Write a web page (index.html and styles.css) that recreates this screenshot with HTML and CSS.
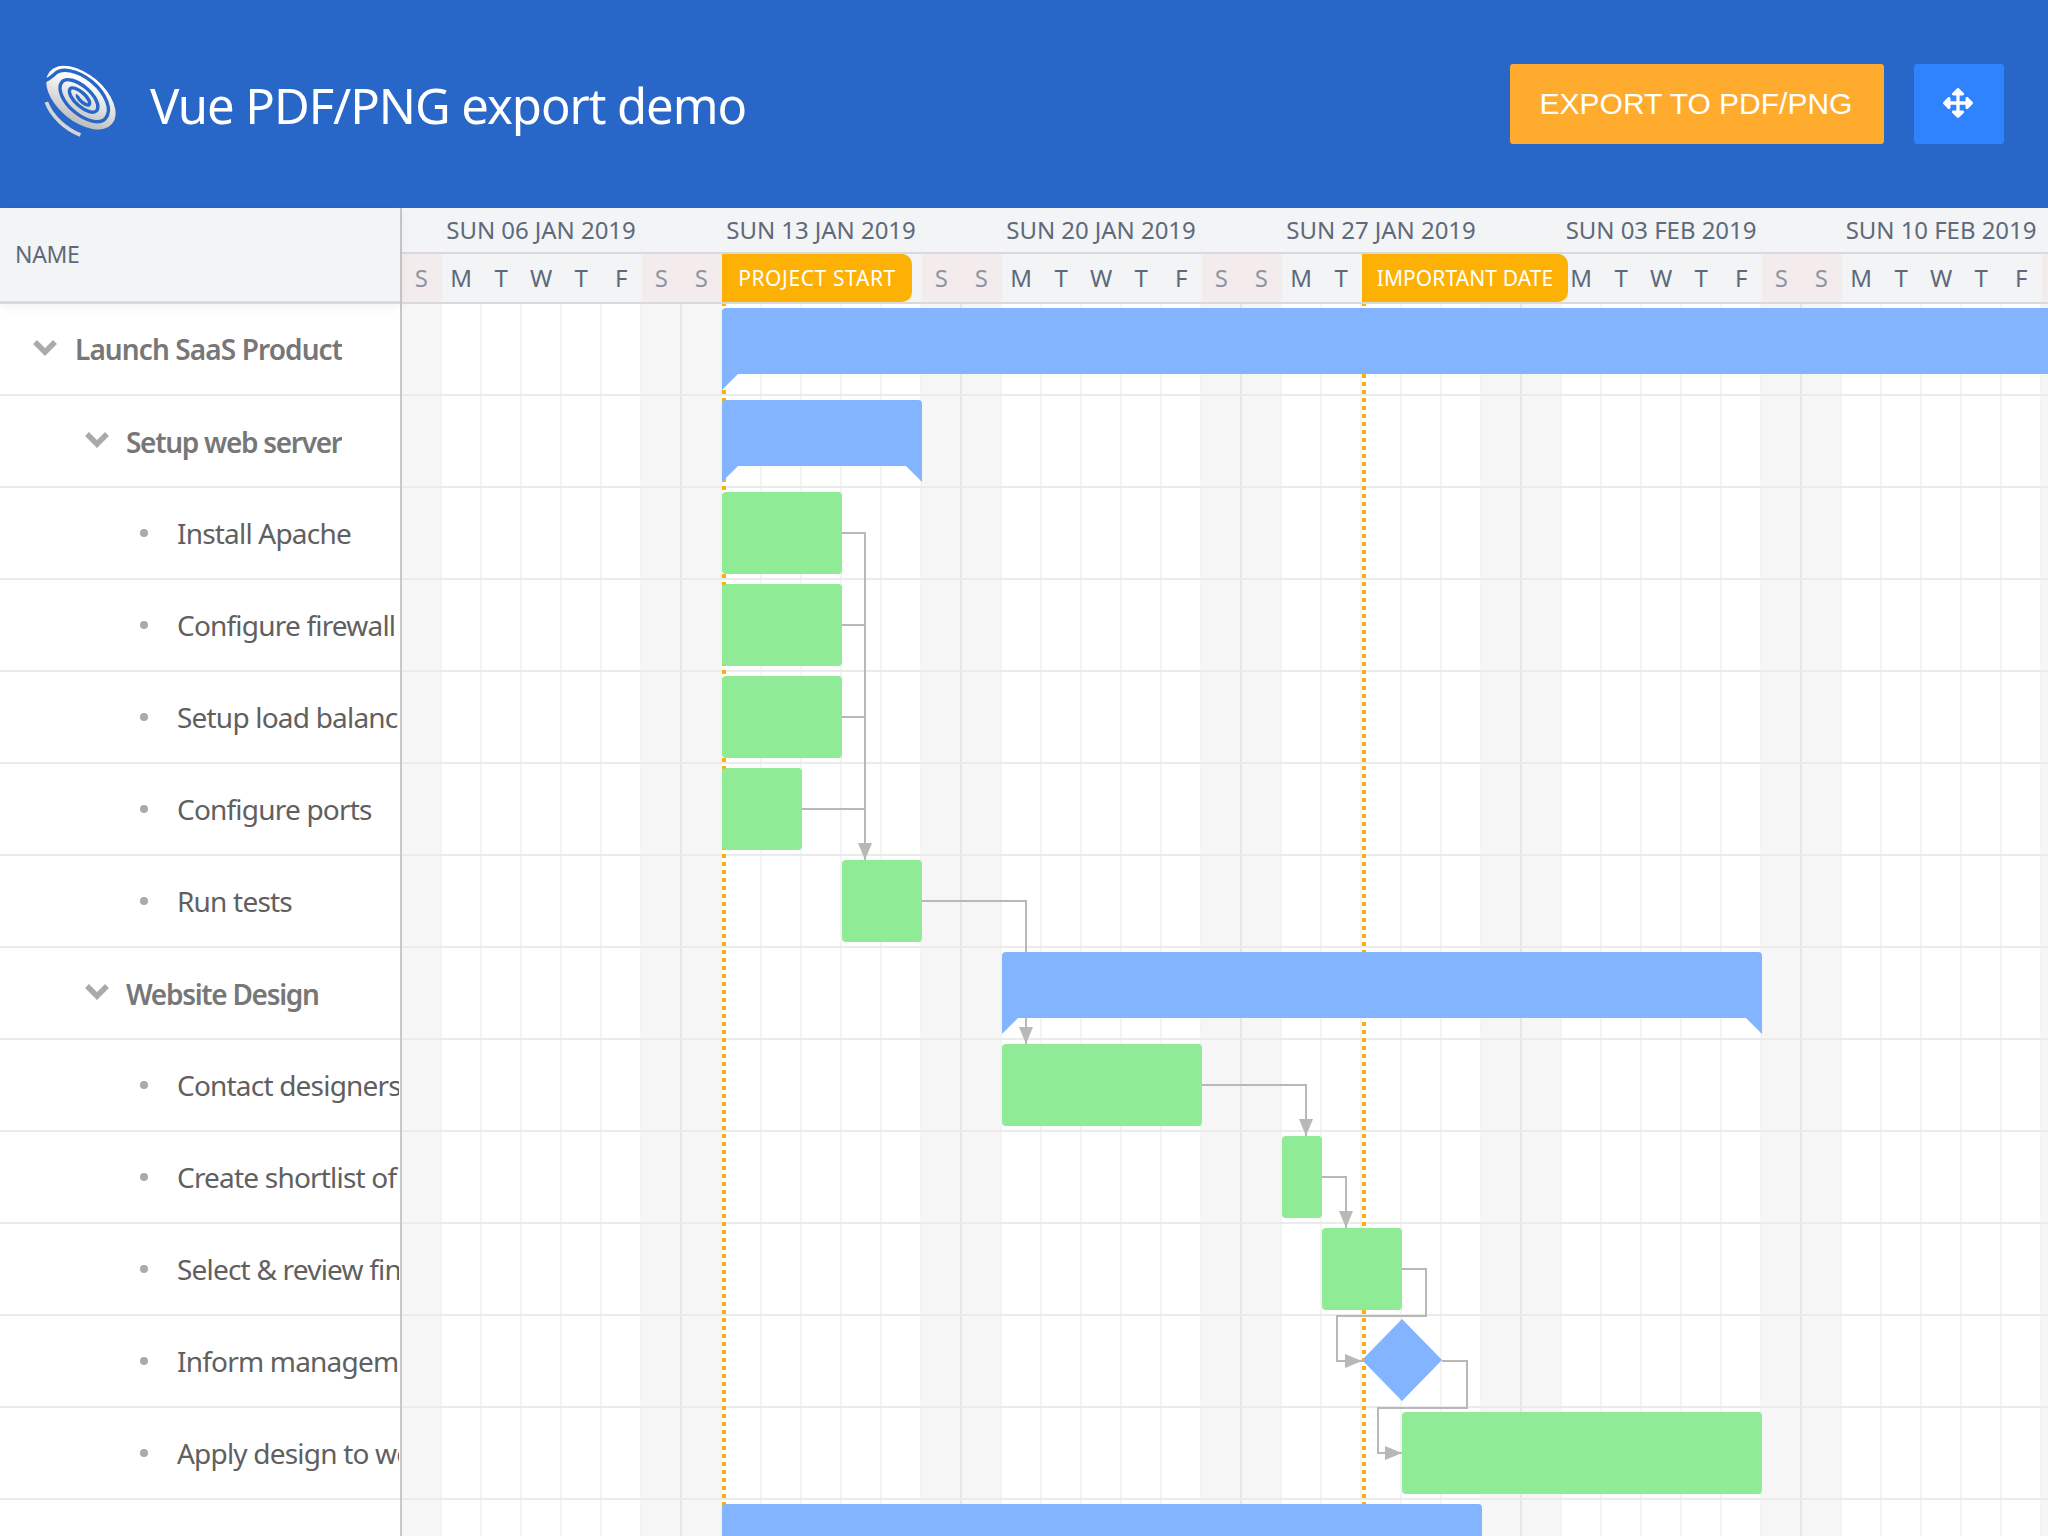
FILE: index.html
```html
<!DOCTYPE html>
<html lang="en">
<head>
    <meta charset="UTF-8">
    <meta name="viewport" content="width=device-width, initial-scale=1.0">
    <title>Vue PDF/PNG export demo</title>
    <link rel="stylesheet" href="styles.css">
</head>
<body>
    <header class="topbar">
        <svg class="logo" viewBox="0 0 84 84">
            <defs>
                <linearGradient id="logoFill" x1="0" y1="0" x2="0.6" y2="1">
                    <stop offset="0.3" stop-color="#ffffff"/>
                    <stop offset="1" stop-color="#bfbfbf"/>
                </linearGradient>
            </defs>
            <g transform="translate(41,37) rotate(40)">
                <ellipse rx="38" ry="22" fill="url(#logoFill)"/>
                <path d="M-36,10 Q-34,6 -33,0 A31.5,18 0 0 1 30,0 A26.5,14 0 0 1 -23,0 A21,10 0 0 1 19,0 A16,7 0 0 1 -13,0 A11.5,4.5 0 0 1 10,0 A7,2.5 0 0 1 -4,0" fill="none" stroke="#2867c8" stroke-width="3.2"/>
                <path d="M-22,24 A38,24 0 0 0 22,27" fill="none" stroke="#d6d6d6" stroke-width="3.5"/>
            </g>
        </svg>
        <h1 class="title">Vue PDF/PNG export demo</h1>
        <button class="btn btn-export">EXPORT TO PDF/PNG</button>
        <button class="btn btn-move">
            <svg viewBox="0 0 512 512"><path fill="#fff" d="M352.201 425.775l-79.196 79.196c-9.373 9.373-24.568 9.373-33.941 0l-79.196-79.196c-15.119-15.119-4.411-40.971 16.971-40.97h51.162L228 284H127.196v51.162c0 21.382-25.851 32.09-40.971 16.971L7.029 272.937c-9.373-9.373-9.373-24.569 0-33.941L86.225 159.8c15.119-15.119 40.971-4.411 40.971 16.971V228H228V127.196h-51.23c-21.382 0-32.09-25.851-16.971-40.971l79.196-79.196c9.373-9.373 24.568-9.373 33.941 0l79.196 79.196c15.119 15.119 4.411 40.971-16.971 40.971h-51.162V228h100.804v-51.162c0-21.382 25.851-32.09 40.97-16.971l79.196 79.196c9.373 9.373 9.373 24.569 0 33.941L425.773 352.2c-15.119 15.119-40.971 4.411-40.97-16.971V284H284v100.804h51.23c21.382 0 32.09 25.851 16.971 40.971z"/></svg>
        </button>
    </header>

    <main class="gantt">
        <section class="tree">
            <div class="tree-head">NAME</div>
            <div class="tree-row parent root"><svg class="chev" viewBox="0 0 24 16"><path d="M2 2 L12 12 L22 2"/></svg><span class="name">Launch SaaS Product</span></div>
            <div class="tree-row parent lvl1"><svg class="chev" viewBox="0 0 24 16"><path d="M2 2 L12 12 L22 2"/></svg><span class="name">Setup web server</span></div>
            <div class="tree-row leaf"><i class="dot"></i><span class="name">Install Apache</span></div>
            <div class="tree-row leaf"><i class="dot"></i><span class="name">Configure firewall</span></div>
            <div class="tree-row leaf"><i class="dot"></i><span class="name">Setup load balancer</span></div>
            <div class="tree-row leaf"><i class="dot"></i><span class="name">Configure ports</span></div>
            <div class="tree-row leaf"><i class="dot"></i><span class="name">Run tests</span></div>
            <div class="tree-row parent lvl1"><svg class="chev" viewBox="0 0 24 16"><path d="M2 2 L12 12 L22 2"/></svg><span class="name">Website Design</span></div>
            <div class="tree-row leaf"><i class="dot"></i><span class="name">Contact designers</span></div>
            <div class="tree-row leaf"><i class="dot"></i><span class="name">Create shortlist of three designers</span></div>
            <div class="tree-row leaf"><i class="dot"></i><span class="name">Select &amp; review final design</span></div>
            <div class="tree-row leaf"><i class="dot"></i><span class="name">Inform management about decision</span></div>
            <div class="tree-row leaf"><i class="dot"></i><span class="name">Apply design to web site</span></div>
            <div class="tree-row parent lvl1"><svg class="chev" viewBox="0 0 24 16"><path d="M2 2 L12 12 L22 2"/></svg><span class="name">Setup Test Strategy</span></div>
        </section>

        <section class="timeline">
            <div class="tl-head">
                <div class="tier-weeks">
                    <div class="week">SUN 06 JAN 2019</div>
                    <div class="week">SUN 13 JAN 2019</div>
                    <div class="week">SUN 20 JAN 2019</div>
                    <div class="week">SUN 27 JAN 2019</div>
                    <div class="week">SUN 03 FEB 2019</div>
                    <div class="week">SUN 10 FEB 2019</div>
                </div>
                <div class="tier-days">
                    <div class="day off">S</div><div class="day">M</div><div class="day">T</div><div class="day">W</div><div class="day">T</div><div class="day">F</div><div class="day off">S</div>
                    <div class="day off">S</div><div class="day">M</div><div class="day">T</div><div class="day">W</div><div class="day">T</div><div class="day">F</div><div class="day off">S</div>
                    <div class="day off">S</div><div class="day">M</div><div class="day">T</div><div class="day">W</div><div class="day">T</div><div class="day">F</div><div class="day off">S</div>
                    <div class="day off">S</div><div class="day">M</div><div class="day">T</div><div class="day">W</div><div class="day">T</div><div class="day">F</div><div class="day off">S</div>
                    <div class="day off">S</div><div class="day">M</div><div class="day">T</div><div class="day">W</div><div class="day">T</div><div class="day">F</div><div class="day off">S</div>
                    <div class="day off">S</div><div class="day">M</div><div class="day">T</div><div class="day">W</div><div class="day">T</div><div class="day">F</div><div class="day off">S</div>
                    <div class="label label-start">PROJECT START</div>
                    <div class="label label-date">IMPORTANT DATE</div>
                </div>
            </div>

            <div class="tl-body">
                <div class="tl-row"></div><div class="tl-row"></div><div class="tl-row"></div><div class="tl-row"></div>
                <div class="tl-row"></div><div class="tl-row"></div><div class="tl-row"></div><div class="tl-row"></div>
                <div class="tl-row"></div><div class="tl-row"></div><div class="tl-row"></div><div class="tl-row"></div>
                <div class="tl-row"></div><div class="tl-row"></div>

                <div class="dateline line-start"></div>
                <div class="dateline line-date"></div>

                <!-- coordinates below are relative to the timeline body, which starts at 402,304 -->
                <svg class="deps" width="1646" height="1232">
                    <defs>
                        <marker id="arrow" markerUnits="userSpaceOnUse" markerWidth="17" markerHeight="14" refX="17" refY="7" orient="auto">
                            <path d="M0 0 L17 7 L0 14 Z"/>
                        </marker>
                    </defs>
                    <path d="M440 229 H463 V556" marker-end="url(#arrow)"/>
                    <path d="M440 321 H463"/>
                    <path d="M440 413 H463"/>
                    <path d="M400 505 H463"/>
                    <path d="M520 597 H624 V740" marker-end="url(#arrow)"/>
                    <path d="M800 781 H904 V832" marker-end="url(#arrow)"/>
                    <path d="M920 873 H944 V924" marker-end="url(#arrow)"/>
                    <path d="M1000 965 H1024 V1012 H935 V1057 H960" marker-end="url(#arrow)"/>
                    <path d="M1040 1057 H1065 V1104 H976 V1149 H1000" marker-end="url(#arrow)"/>
                </svg>

                <div class="bar summary no-end b-launch"></div>
                <div class="bar summary b-server"></div>
                <div class="bar task b-apache"></div>
                <div class="bar task b-firewall"></div>
                <div class="bar task b-balancer"></div>
                <div class="bar task b-ports"></div>
                <div class="bar task b-tests"></div>
                <div class="bar summary b-design"></div>
                <div class="bar task b-contact"></div>
                <div class="bar task b-shortlist"></div>
                <div class="bar task b-review"></div>
                <div class="milestone"></div>
                <div class="bar task b-apply"></div>
                <div class="bar summary b-strategy"></div>
            </div>
        </section>
    </main>
</body>
</html>
```

FILE: styles.css
```css
html, body {
    height: 100%;
}
body {
    font-family: "Noto Sans", "Open Sans", sans-serif;
    margin: 0;
    overflow: hidden;
    display: flex;
    flex-direction: column;
    background-color: white;
}

/* top bar */
.topbar {
    flex: none;
    height: 208px;
    display: flex;
    align-items: center;
    padding: 0 44px 0 37px;
    background-color: #2867c8;
    color: white;
}
.logo {
    width: 90px;
    height: 90px;
    margin: -3px 23px 0 0;
}
.title {
    flex: 1;
    margin: 0;
    padding-top: 2px;
    font-size: 49px;
    font-weight: 400;
    letter-spacing: -1.05px;
}
.btn {
    height: 80px;
    border: none;
    border-radius: 3px;
    color: white;
    font-family: "Liberation Sans", Arial, sans-serif;
    font-size: 30px;
}
.btn-export {
    width: 374px;
    padding: 0 2px 0 0;
    background-color: #ffab2e;
}
.btn-move {
    width: 90px;
    margin-left: 30px;
    padding: 0 2px 2px 0;
    background-color: #2f83ff;
    display: flex;
    align-items: center;
    justify-content: center;
}
.btn-move svg {
    width: 30px;
    height: 30px;
}

/* layout */
.gantt {
    flex: 1;
    display: flex;
    min-height: 0;
}

/* left tree */
.tree {
    flex: none;
    width: 402px;
    box-sizing: border-box;
    border-right: 2px solid #c8c8c8;
    position: relative;
    z-index: 2;
    background-color: white;
}
.tree-head {
    height: 96px;
    box-sizing: border-box;
    padding: 0 0 2px 15px;
    display: flex;
    align-items: center;
    background-color: #f3f4f6;
    border-bottom: 3px solid #d8d9dc;
    box-shadow: 0 3px 10px rgba(0, 0, 0, 0.06);
    color: #5e6a7a;
    font-size: 23px;
    letter-spacing: -0.35px;
}
.tree-row {
    height: 92px;
    box-sizing: border-box;
    padding-right: 1px;
    display: flex;
    align-items: center;
    border-bottom: 2px solid #ebebeb;
    white-space: nowrap;
    overflow: hidden;
    font-size: 28px;
    letter-spacing: -0.8px;
}
.tree-row .name {
    color: #606060;
    overflow: hidden;
}
.parent {
    padding-left: 33px;
}
.parent .name {
    margin-left: 18px;
    font-weight: 600;
    color: #777;
    letter-spacing: -1.3px;
    padding-top: 1px;
}
.root .name {
    letter-spacing: -0.9px;
    padding-top: 0;
}
.lvl1 {
    padding-left: 85px;
}
.lvl1 .name {
    margin-left: 17px;
}
.chev {
    flex: none;
    width: 24px;
    height: 16px;
    margin-top: -2px;
}
.chev path {
    fill: none;
    stroke: #aaa;
    stroke-width: 5.5;
}
.leaf {
    padding-left: 140px;
}
.dot {
    flex: none;
    width: 8px;
    height: 8px;
    border-radius: 50%;
    background-color: #aaa;
    margin-right: 29px;
}

/* timeline header */
.timeline {
    flex: 1;
    min-width: 0;
    overflow: hidden;
    display: flex;
    flex-direction: column;
}
.tl-head {
    flex: none;
    height: 96px;
    background-color: #f3f4f6;
    color: #5e6a7a;
    border-bottom: 2px solid #d8d9dc;
    box-sizing: border-box;
}
.tier-weeks {
    display: flex;
    height: 46px;
    box-sizing: border-box;
    border-bottom: 2px solid #d8d9dc;
}
.week {
    flex: none;
    width: 280px;
    box-sizing: border-box;
    padding-right: 2px;
    text-align: center;
    line-height: 43px;
    font-size: 24px;
    letter-spacing: -0.05px;
}
.tier-days {
    display: flex;
    height: 48px;
    position: relative;
}
.day {
    flex: none;
    width: 40px;
    box-sizing: border-box;
    padding-right: 2px;
    text-align: center;
    line-height: 48px;
    font-size: 24px;
    letter-spacing: -0.5px;
}
.off {
    background-color: #f3ebec;
    color: #8e96a3;
}
.label {
    position: absolute;
    top: 0;
    height: 48px;
    line-height: 48px;
    text-align: center;
    color: white;
    background-color: #fdb105;
    border-radius: 0 10px 10px 0;
    font-size: 21px;
    letter-spacing: 0.1px;
    white-space: nowrap;
}
.label-start {
    left: 320px;
    width: 190px;
    letter-spacing: 0.6px;
}
.label-date {
    left: 960px;
    width: 206px;
}

/* timeline body */
.tl-body {
    flex: 1;
    position: relative;
    overflow: hidden;
    background-image:
        repeating-linear-gradient(90deg, transparent 0 278px, #e6e6e6 278px 280px),
        repeating-linear-gradient(90deg, transparent 0 38px, #f4f4f4 38px 40px),
        repeating-linear-gradient(90deg, #f6f6f6 0 38px, transparent 38px 238px, #f6f6f6 238px 280px);
}
.tl-row {
    height: 92px;
    box-sizing: border-box;
    border-bottom: 2px solid #ebebeb;
}
.dateline {
    position: absolute;
    top: 0;
    bottom: 0;
    width: 4px;
    background-image: repeating-linear-gradient(180deg, #fdb105 0 4px, transparent 4px 8px);
    background-position: 0 6px;
}
.line-start {
    left: 320px;
}
.line-date {
    left: 960px;
}
.deps {
    position: absolute;
    top: 0;
    left: 0;
}
.deps path {
    fill: none;
    stroke: #b8b8b8;
    stroke-width: 2;
}
.deps marker path {
    stroke: none;
    fill: #b8b8b8;
}

/* bars */
.bar {
    position: absolute;
    border-radius: 4px;
}
.task {
    height: 82px;
    background-color: #90eb96;
}
.summary {
    height: 66px;
    background-color: #82b4ff;
    border-radius: 4px 4px 0 0;
}
.summary::before,
.summary::after {
    content: "";
    position: absolute;
    top: 100%;
    border-bottom: 16px solid transparent;
}
.summary::before {
    left: 0;
    border-left: 16px solid #82b4ff;
}
.summary::after {
    right: 0;
    border-right: 16px solid #82b4ff;
}
.no-end::after {
    display: none;
}
.b-launch { left: 320px; right: -10px; top: 4px; }
.b-server { left: 320px; width: 200px; top: 96px; }
.b-apache { left: 320px; width: 120px; top: 188px; }
.b-firewall { left: 320px; width: 120px; top: 280px; }
.b-balancer { left: 320px; width: 120px; top: 372px; }
.b-ports { left: 320px; width: 80px; top: 464px; }
.b-tests { left: 440px; width: 80px; top: 556px; }
.b-design { left: 600px; width: 760px; top: 648px; }
.b-contact { left: 600px; width: 200px; top: 740px; }
.b-shortlist { left: 880px; width: 40px; top: 832px; }
.b-review { left: 920px; width: 80px; top: 924px; }
.b-apply { left: 1000px; width: 360px; top: 1108px; }
.b-strategy { left: 320px; width: 760px; top: 1200px; }
.milestone {
    position: absolute;
    left: 960px;
    top: 1015px;
    width: 80px;
    height: 82px;
    background-color: #82b4ff;
    clip-path: polygon(50% 0, 100% 50%, 50% 100%, 0 50%);
}
```
